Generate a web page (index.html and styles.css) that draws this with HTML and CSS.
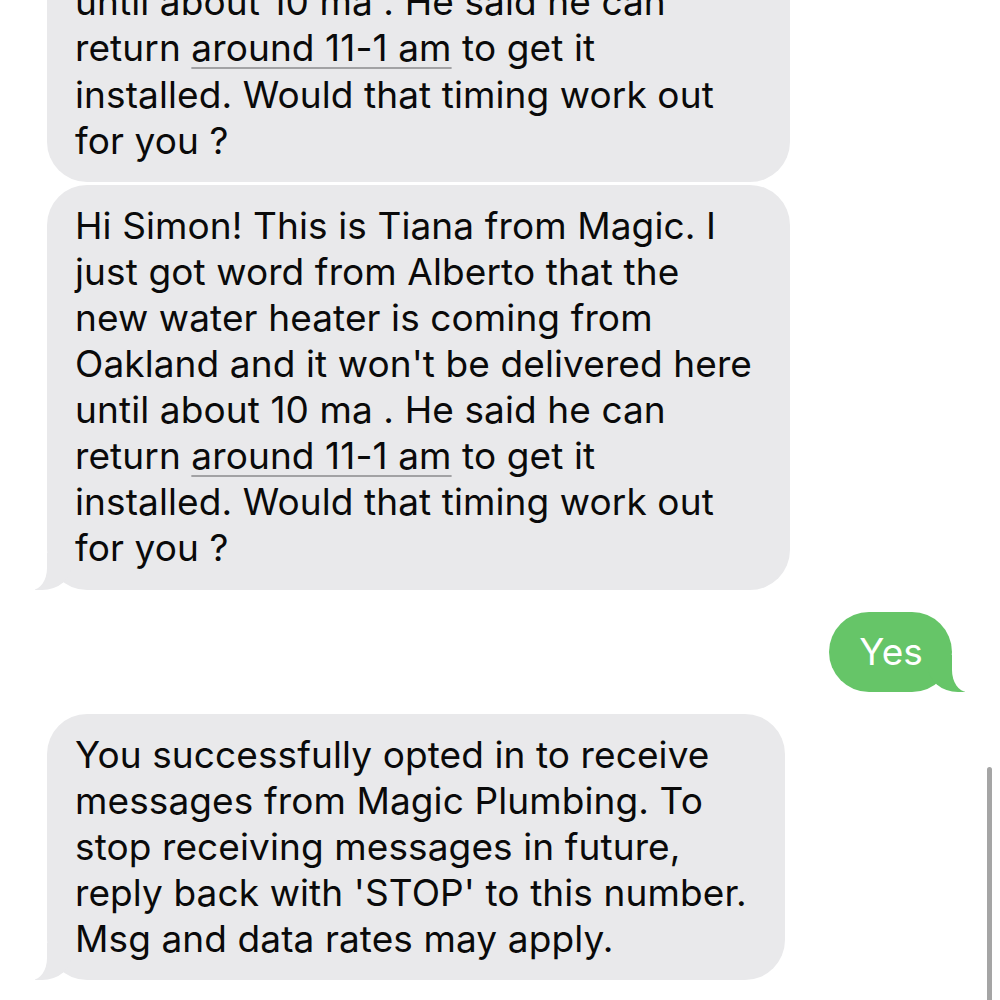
FILE: index.html
```html
<!DOCTYPE html>
<html lang="en">
<head>
<meta charset="utf-8">
<title>Messages</title>
<link rel="stylesheet" href="styles.css">
</head>
<body>
<main class="thread">
  <div class="bubble in">Hi Simon! This is Tiana from Magic. I<br>just got word from Alberto that the<br>new water heater is coming from<br>Oakland and it won't be delivered here<br>until about 10 ma . He said he can<br>return <span class="link">around 11-1 am</span> to get it<br>installed. Would that timing work out<br>for you ?</div>
  <div class="bubble in tail">Hi Simon! This is Tiana from Magic. I<br>just got word from Alberto that the<br>new water heater is coming from<br>Oakland and it won't be delivered here<br>until about 10 ma . He said he can<br>return <span class="link">around 11-1 am</span> to get it<br>installed. Would that timing work out<br>for you ?</div>
  <div class="bubble out tail">Yes</div>
  <div class="bubble in tail">You successfully opted in to receive<br>messages from Magic Plumbing. To<br>stop receiving messages in future,<br>reply back with 'STOP' to this number.<br>Msg and data rates may apply.</div>
</main>
<div class="scrollbar"></div>
</body>
</html>
```
FILE: styles.css
```css
html, body {
  margin: 0;
  padding: 0;
  background: #ffffff;
  overflow: hidden;
}

body {
  width: 1000px;
  height: 1000px;
  font-family: Inter, "Noto Sans", "Liberation Sans", sans-serif;
  font-size: 37px;
  line-height: 46.1px;
  letter-spacing: 0.1px;
  color: #0a0a0a;
}

.thread {
  display: flex;
  flex-direction: column;
  align-items: flex-start;
  margin-top: -223px;
  padding: 0 48px 0 47px;
}

.bubble {
  position: relative;
  box-sizing: border-box;
  padding: 18px 38px 18px 28px;
  border-radius: 40px;
  background: #e9e9eb;
  white-space: nowrap;
}

.bubble + .bubble {
  margin-top: 3px;
}

.bubble.tail + .bubble {
  margin-top: 22px;
}

.bubble.out {
  align-self: flex-end;
  background: #66c568;
  color: #ffffff;
  padding: 17px 29px 17px 30px;
}

.link {
  text-decoration: underline;
  text-decoration-color: #a2a2a4;
  text-decoration-thickness: 2px;
  text-underline-offset: 6px;
}

/* iMessage tails */
.bubble.tail::before,
.bubble.tail::after {
  content: "";
  position: absolute;
  bottom: 0;
  height: 37px;
}

.bubble.in.tail::before {
  left: -12px;
  border-left: 37px solid #e9e9eb;
  border-bottom-right-radius: 30px 26px;
}

.bubble.in.tail::after {
  left: -23px;
  width: 23px;
  background: #ffffff;
  border-bottom-right-radius: 15px 22px;
}

.bubble.out.tail::before {
  right: -13px;
  border-right: 37px solid #66c568;
  border-bottom-left-radius: 30px 26px;
}

.bubble.out.tail::after {
  right: -23px;
  width: 23px;
  background: #ffffff;
  border-bottom-left-radius: 15px 22px;
}

.scrollbar {
  position: fixed;
  right: 8px;
  top: 767px;
  bottom: -6px;
  width: 5px;
  border-radius: 3px;
  background: #a5a5a5;
}
```
